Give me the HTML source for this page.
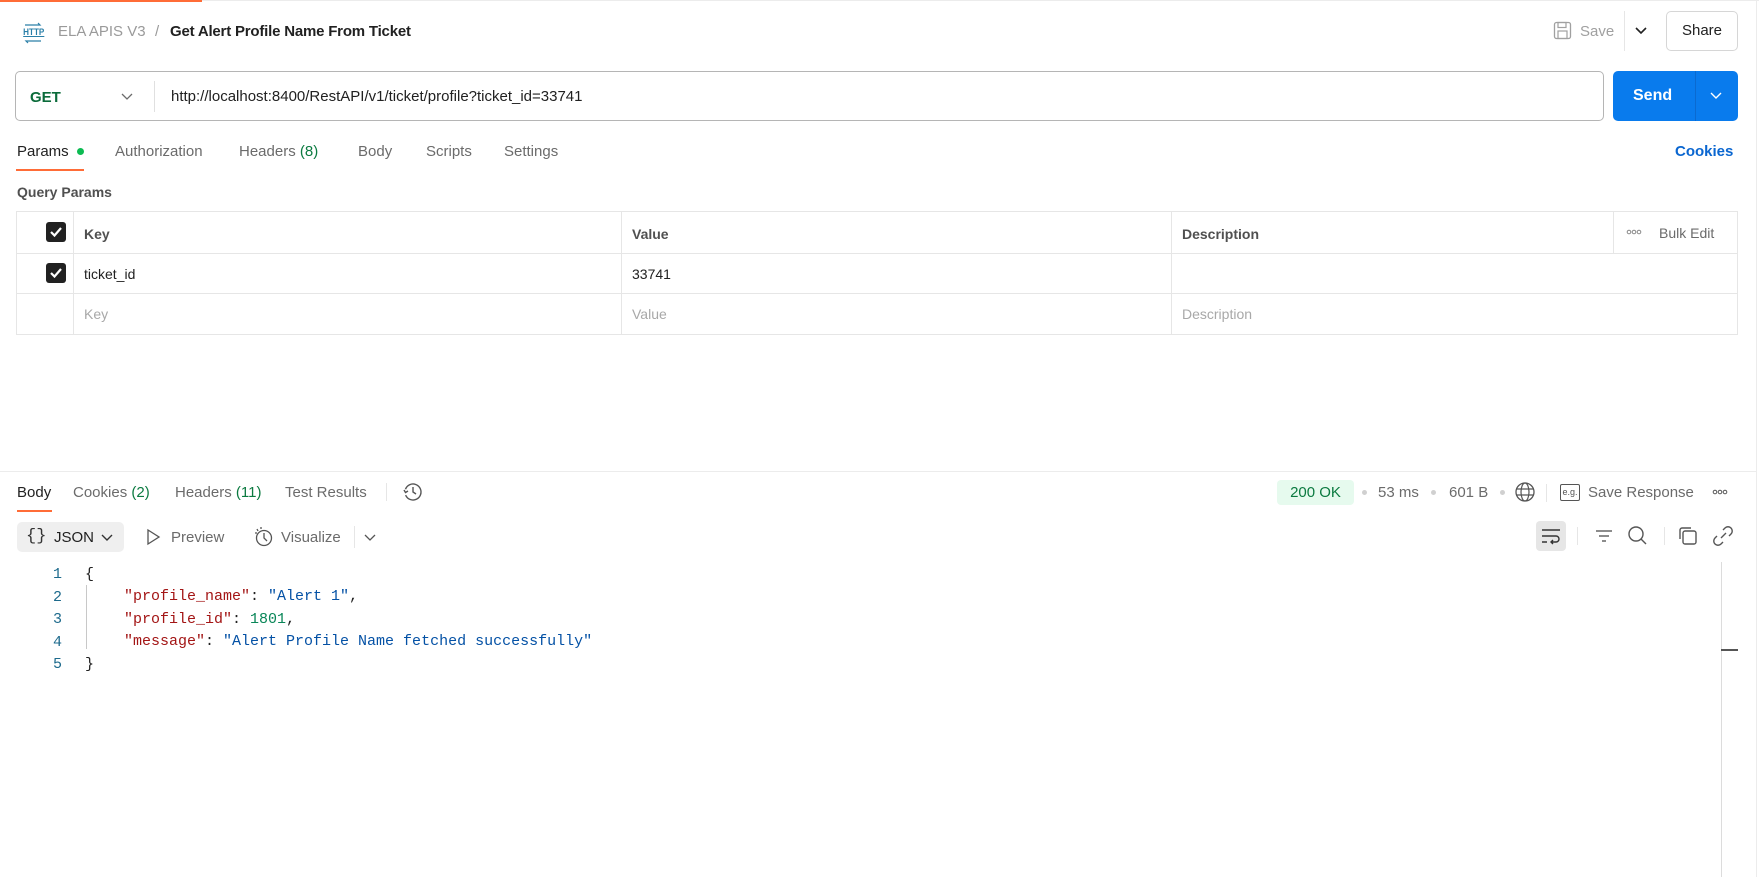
<!DOCTYPE html>
<html><head><meta charset="utf-8"><style>
*{margin:0;padding:0;box-sizing:border-box}
body{width:1759px;height:877px;background:#fff;font-family:"Liberation Sans",sans-serif;font-size:15px;color:#212121;position:relative;overflow:hidden}
.a{position:absolute;white-space:nowrap}
.g{color:#6b6b6b}
.mono{font-family:"Liberation Mono",monospace;font-size:15px}
.cb{position:absolute;width:20px;height:20px;background:#212121;border-radius:3px}
.cb svg{position:absolute;left:3px;top:3px}
.ln{position:absolute;background:#e6e6e6}
</style></head><body>
<div class="ln" style="left:0;top:0;width:1759px;height:1px;background:#ececec"></div>
<div class="a" style="left:0;top:0;width:202px;height:2px;background:#ff6c37"></div>
<div class="ln" style="left:1756px;top:0;width:1px;height:877px;background:#ececec"></div>

<!-- header -->
<div class="a" style="left:22px;top:23px;font-size:9px;color:#2a7fa8;font-weight:bold;text-decoration:underline;line-height:18px;transform:scaleX(.9)">HTTP</div>
<svg class="a" style="left:22px;top:22px" width="22" height="22"><path d="M3 3h15l-2-2M19 19H4l2 2" stroke="#2a7fa8" fill="none" stroke-width="1.2"/></svg>
<div class="a" style="left:58px;top:23px;color:#9a9a9a;font-size:15px">ELA APIS V3</div>
<div class="a" style="left:155px;top:23px;color:#9a9a9a">/</div>
<div class="a" style="left:170px;top:23px;font-weight:bold;font-size:15px;color:#212121;letter-spacing:-.2px">Get Alert Profile Name From Ticket</div>
<svg class="a" style="left:1553px;top:21px" width="20" height="20"><rect x="1.5" y="1.5" width="16" height="16" rx="2" fill="none" stroke="#a0a0a0" stroke-width="1.3"/><rect x="5" y="1.5" width="8" height="5" fill="none" stroke="#a0a0a0" stroke-width="1.2"/><rect x="5" y="10" width="9" height="7.5" fill="none" stroke="#a0a0a0" stroke-width="1.2"/></svg>
<div class="a" style="left:1580px;top:23px;color:#a0a0a0">Save</div>
<div class="ln" style="left:1624px;top:11px;width:1px;height:40px"></div>
<svg class="a" style="left:1634px;top:26px" width="14" height="10"><path d="M2 2l5 5 5-5" stroke="#212121" fill="none" stroke-width="1.6"/></svg>
<div class="a" style="left:1666px;top:11px;width:72px;height:40px;border:1px solid #d6d6d6;border-radius:5px;text-align:center;line-height:38px">Share</div>

<!-- URL bar -->
<div class="a" style="left:15px;top:71px;width:1589px;height:50px;border:1px solid #b5b5b5;border-radius:5px"></div>
<div class="a" style="left:30px;top:89px;color:#0b6b3a;font-weight:bold;font-size:15px">GET</div>
<svg class="a" style="left:120px;top:92px" width="14" height="10"><path d="M2 2l5 5 5-5" stroke="#6b6b6b" fill="none" stroke-width="1.3"/></svg>
<div class="ln" style="left:154px;top:81px;width:1px;height:31px;background:#e0e0e0"></div>
<div class="a" style="left:171px;top:88px;font-size:15px">http://localhost:8400/RestAPI/v1/ticket/profile?ticket_id=33741</div>
<div class="a" style="left:1613px;top:71px;width:125px;height:50px;background:#097bed;border-radius:5px"></div>
<div class="a" style="left:1633px;top:87px;color:#fff;font-weight:bold;font-size:16px">Send</div>
<div class="ln" style="left:1695px;top:71px;width:1px;height:50px;background:#0a6ad0"></div>
<svg class="a" style="left:1709px;top:91px" width="14" height="10"><path d="M2 2l5 5 5-5" stroke="#fff" fill="none" stroke-width="1.4"/></svg>

<!-- request tabs -->
<div class="a" style="left:17px;top:143px">Params</div>
<div class="a" style="left:77px;top:148px;width:7px;height:7px;border-radius:50%;background:#0cbb52"></div>
<div class="a g" style="left:115px;top:143px">Authorization</div>
<div class="a g" style="left:239px;top:143px">Headers <span style="color:#0b7a40">(8)</span></div>
<div class="a g" style="left:358px;top:143px">Body</div>
<div class="a g" style="left:426px;top:143px">Scripts</div>
<div class="a g" style="left:504px;top:143px">Settings</div>
<div class="a" style="left:1675px;top:143px;color:#0a66d0;font-weight:bold">Cookies</div>
<div class="a" style="left:16px;top:169px;width:68px;height:2px;background:#ff6c37"></div>
<div class="a" style="left:17px;top:184px;font-weight:bold;color:#505050;font-size:14px">Query Params</div>

<!-- table -->
<div class="a" style="left:16px;top:211px;width:1722px;height:124px;border:1px solid #e6e6e6"></div>
<div class="ln" style="left:16px;top:253px;width:1722px;height:1px"></div>
<div class="ln" style="left:16px;top:293px;width:1722px;height:1px"></div>
<div class="ln" style="left:73px;top:211px;width:1px;height:124px"></div>
<div class="ln" style="left:621px;top:211px;width:1px;height:124px"></div>
<div class="ln" style="left:1171px;top:211px;width:1px;height:124px"></div>
<div class="ln" style="left:1613px;top:211px;width:1px;height:42px"></div>
<div class="cb" style="left:46px;top:222px"><svg width="14" height="14"><path d="M2 7l3.5 3.5L12 3" stroke="#fff" fill="none" stroke-width="2.2"/></svg></div>
<div class="cb" style="left:46px;top:263px"><svg width="14" height="14"><path d="M2 7l3.5 3.5L12 3" stroke="#fff" fill="none" stroke-width="2.2"/></svg></div>
<div class="a" style="left:84px;top:226px;font-weight:bold;color:#505050;font-size:14px">Key</div>
<div class="a" style="left:632px;top:226px;font-weight:bold;color:#505050;font-size:14px">Value</div>
<div class="a" style="left:1182px;top:226px;font-weight:bold;color:#505050;font-size:14px">Description</div>
<svg class="a" style="left:1626px;top:229px" width="16" height="6"><circle cx="3" cy="3" r="1.8" fill="none" stroke="#888" stroke-width="1"/><circle cx="8" cy="3" r="1.8" fill="none" stroke="#888" stroke-width="1"/><circle cx="13" cy="3" r="1.8" fill="none" stroke="#888" stroke-width="1"/></svg>
<div class="a" style="left:1659px;top:225px;color:#6b6b6b;font-size:14px">Bulk Edit</div>
<div class="a" style="left:84px;top:266px;font-size:14px">ticket_id</div>
<div class="a" style="left:632px;top:266px;font-size:14px">33741</div>
<div class="a" style="left:84px;top:306px;font-size:14px;color:#a8a8a8">Key</div>
<div class="a" style="left:632px;top:306px;font-size:14px;color:#a8a8a8">Value</div>
<div class="a" style="left:1182px;top:306px;font-size:14px;color:#a8a8a8">Description</div>

<!-- divider -->
<div class="ln" style="left:0;top:471px;width:1756px;height:1px;background:#ececec"></div>

<!-- response tabs -->
<div class="a" style="left:17px;top:484px">Body</div>
<div class="a g" style="left:73px;top:484px">Cookies <span style="color:#0b7a40">(2)</span></div>
<div class="a g" style="left:175px;top:484px">Headers <span style="color:#0b7a40">(11)</span></div>
<div class="a g" style="left:285px;top:484px">Test Results</div>
<div class="ln" style="left:386px;top:483px;width:1px;height:18px"></div>
<svg class="a" style="left:402px;top:481px" width="22" height="22"><circle cx="11" cy="11" r="8" fill="none" stroke="#555" stroke-width="1.4" stroke-dasharray="44 6" transform="rotate(200 11 11)"/><path d="M11 6v5l3 2M2 9l1.5 2.5L6 10" stroke="#555" fill="none" stroke-width="1.4"/></svg>
<div class="a" style="left:17px;top:510px;width:35px;height:2px;background:#ff6c37"></div>

<div class="a" style="left:1277px;top:480px;width:77px;height:25px;background:#e6faee;border-radius:4px;color:#0b7a40;text-align:center;line-height:25px;font-size:15px">200 OK</div>
<div class="a" style="left:1362px;top:490px;width:5px;height:5px;border-radius:50%;background:#d0d0d0"></div>
<div class="a g" style="left:1378px;top:484px">53 ms</div>
<div class="a" style="left:1431px;top:490px;width:5px;height:5px;border-radius:50%;background:#d0d0d0"></div>
<div class="a g" style="left:1449px;top:484px">601 B</div>
<div class="a" style="left:1500px;top:490px;width:5px;height:5px;border-radius:50%;background:#d0d0d0"></div>
<svg class="a" style="left:1514px;top:481px" width="22" height="22"><circle cx="11" cy="11" r="9" fill="none" stroke="#555" stroke-width="1.3"/><ellipse cx="11" cy="11" rx="4" ry="9" fill="none" stroke="#555" stroke-width="1.2"/><path d="M2 8h18M2 14h18" stroke="#555" stroke-width="1.2"/></svg>
<div class="ln" style="left:1546px;top:484px;width:1px;height:18px"></div>
<div class="a" style="left:1560px;top:484px;width:20px;height:17px;border:1.3px solid #555;border-radius:2px;font-size:9px;line-height:14px;text-align:center;color:#555">e.g.</div>
<div class="a g" style="left:1588px;top:484px">Save Response</div>
<svg class="a" style="left:1712px;top:489px" width="16" height="6"><circle cx="3" cy="3" r="1.8" fill="none" stroke="#555" stroke-width="1"/><circle cx="8" cy="3" r="1.8" fill="none" stroke="#555" stroke-width="1"/><circle cx="13" cy="3" r="1.8" fill="none" stroke="#555" stroke-width="1"/></svg>

<!-- format bar -->
<div class="a" style="left:17px;top:522px;width:107px;height:30px;background:#efefef;border-radius:5px"></div>
<div class="a" style="left:26px;top:527px;font-size:17px;color:#333;font-family:'Liberation Mono',monospace">{}</div>
<div class="a" style="left:54px;top:529px">JSON</div>
<svg class="a" style="left:101px;top:533px" width="12" height="9"><path d="M1 2l5 5 5-5" stroke="#333" fill="none" stroke-width="1.4"/></svg>
<svg class="a" style="left:145px;top:527px" width="16" height="20"><path d="M3 3l11 7-11 7z" stroke="#555" fill="none" stroke-width="1.3"/></svg>
<div class="a g" style="left:171px;top:529px">Preview</div>
<svg class="a" style="left:253px;top:526px" width="22" height="22"><circle cx="11" cy="12" r="7.5" fill="none" stroke="#555" stroke-width="1.3"/><path d="M11 7v5l3 3M4 3l1 2M8 1v2M2 7l2 0" stroke="#555" fill="none" stroke-width="1.3"/></svg>
<div class="a g" style="left:281px;top:529px">Visualize</div>
<div class="ln" style="left:354px;top:526px;width:1px;height:22px"></div>
<svg class="a" style="left:364px;top:533px" width="12" height="9"><path d="M1 2l5 5 5-5" stroke="#555" fill="none" stroke-width="1.3"/></svg>

<div class="a" style="left:1536px;top:521px;width:30px;height:30px;background:#e6e6e6;border-radius:4px"></div>
<svg class="a" style="left:1540px;top:525px" width="22" height="22"><path d="M2 5h18M2 11h14a3 3 0 010 6h-5M2 17h5M13 15l-2 2 2 2" stroke="#333" fill="none" stroke-width="1.4"/></svg>
<div class="ln" style="left:1577px;top:527px;width:1px;height:18px"></div>
<svg class="a" style="left:1593px;top:525px" width="22" height="22"><path d="M3 6h16M6 11h10M9 16h4" stroke="#666" stroke-width="1.4"/></svg>
<svg class="a" style="left:1626px;top:524px" width="22" height="22"><circle cx="10" cy="10" r="7" fill="none" stroke="#555" stroke-width="1.4"/><path d="M15 15l5 5" stroke="#555" stroke-width="1.4"/></svg>
<div class="ln" style="left:1664px;top:527px;width:1px;height:18px"></div>
<svg class="a" style="left:1677px;top:525px" width="22" height="22"><rect x="6" y="6" width="13" height="13" rx="2" fill="none" stroke="#555" stroke-width="1.4"/><path d="M3 14V5a2 2 0 012-2h9" stroke="#555" fill="none" stroke-width="1.4"/></svg>
<svg class="a" style="left:1712px;top:525px" width="22" height="22"><path d="M9 13l5-5M11 5l2-2a4 4 0 016 6l-2 2M11 17l-2 2a4 4 0 01-6-6l2-2" stroke="#555" fill="none" stroke-width="1.4"/></svg>

<!-- code -->
<div class="mono a" style="left:46px;top:564px;line-height:22.5px;color:#1d6a8c;text-align:right;width:16px">1<br>2<br>3<br>4<br>5</div>
<div class="mono a" style="left:85px;top:564px;line-height:22.5px;color:#212121">{<br><br><br><br>}</div>
<div class="ln" style="left:86px;top:585px;width:1px;height:64px;background:#c8c8c8"></div>
<div class="mono a" style="left:124px;top:586px;line-height:22.5px;color:#212121"><span style="color:#a31515">"profile_name"</span>: <span style="color:#0451a5">"Alert 1"</span>,<br><span style="color:#a31515">"profile_id"</span>: <span style="color:#098658">1801</span>,<br><span style="color:#a31515">"message"</span>: <span style="color:#0451a5">"Alert Profile Name fetched successfully"</span></div>

<div class="ln" style="left:1721px;top:562px;width:1px;height:315px;background:#dcdcdc"></div>
<div class="a" style="left:1721px;top:649px;width:17px;height:2px;background:#555"></div>
</body></html>
